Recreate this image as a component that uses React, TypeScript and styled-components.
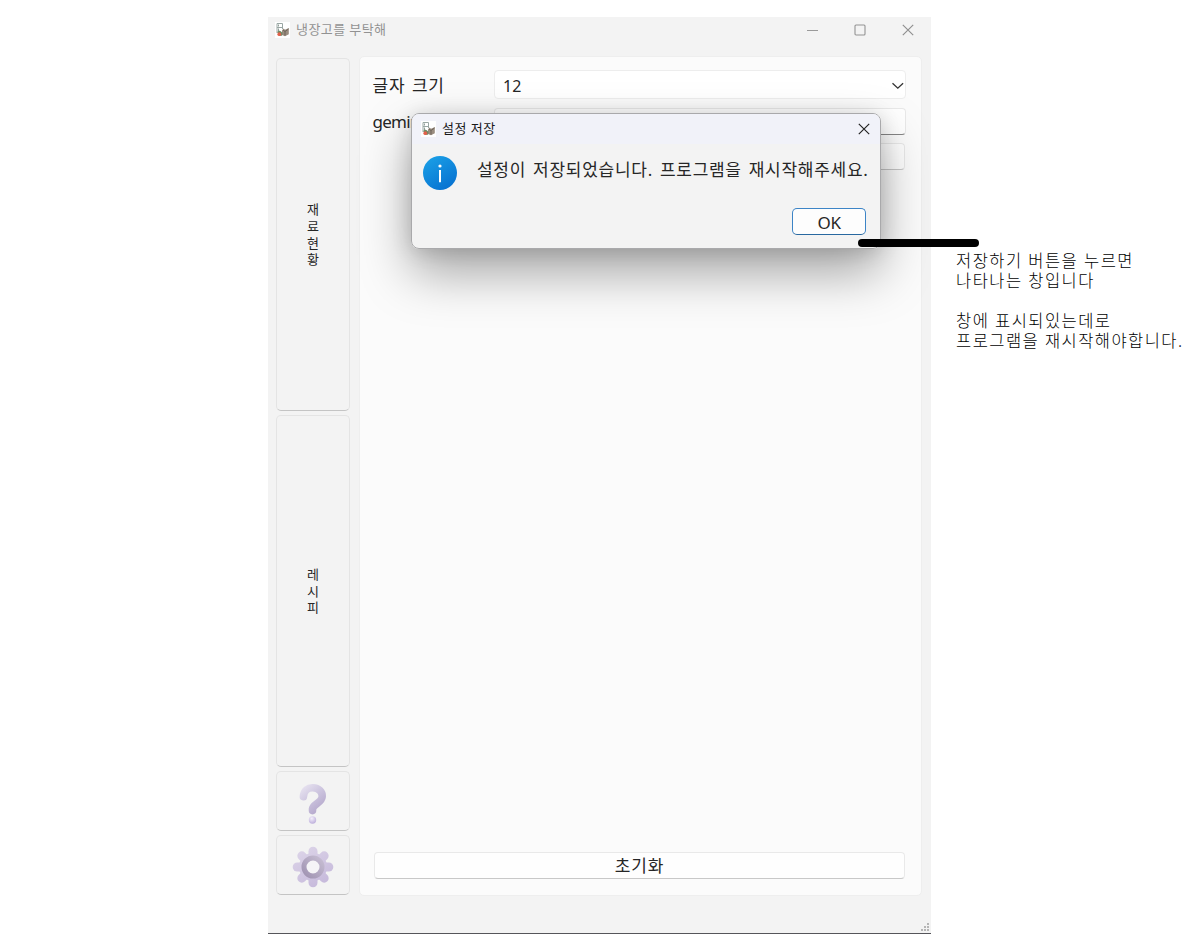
import React from "react";
import styled, { createGlobalStyle } from "styled-components";

const GlobalStyle = createGlobalStyle`
  * { box-sizing: border-box; }
  body { margin: 0; background: #fff; overflow: hidden; }
  button { font: inherit; color: inherit; padding: 0; margin: 0; }
`;

const Page = styled.main`
  position: relative;
  display: flex;
  align-items: flex-start;
  width: 1200px;
  height: 950px;
  padding: 17px 0 0 268px;
  font-family: "Noto Sans", "Noto Sans CJK KR", sans-serif;
  color: #262626;
`;

const Window = styled.section`
  flex: none;
  display: flex;
  flex-direction: column;
  width: 663px;
  height: 917px;
  background: #f3f3f3;
  border-bottom: 1px solid #55555a;
`;

const TitleBar = styled.header`
  display: flex;
  align-items: center;
  height: 25px;
  padding: 0 17px 0 7px;
  color: #929292;
`;

const Title = styled.span<{ $spacing: number }>`
  flex: 1;
  margin: -2px 0 0 6px;
  font-size: 13px;
  line-height: 16px;
  letter-spacing: ${(p) => p.$spacing}px;
  white-space: nowrap;
`;

const WindowControls = styled.div`
  display: flex;
  gap: 36px;
`;

const Body = styled.div`
  flex: 1;
  display: flex;
  gap: 9px;
  padding: 14px 9px 0 8px;
`;

const Sidebar = styled.nav`
  display: flex;
  flex-direction: column;
  gap: 4px;
  width: 74px;
  padding-top: 2px;
`;

const SideButton = styled.button<{ $height: number; $shift?: number }>`
  display: flex;
  flex-direction: column;
  align-items: center;
  justify-content: center;
  height: ${(p) => p.$height}px;
  padding-top: ${(p) => p.$shift ?? 0}px;
  background: #f3f3f3;
  border: 1px solid #e4e4e4;
  border-bottom-color: #c4c4c4;
  border-radius: 5px;
  font-size: 13px;
  line-height: 16.6px;
`;

const Panel = styled.div`
  display: flex;
  flex-direction: column;
  width: 563px;
  height: 840px;
  padding: 13px 15px 16px 12px;
  background: #fbfbfb;
  border: 1px solid #eeeeee;
  border-radius: 5px;
`;

const Row = styled.div<{ $gap: number }>`
  display: flex;
  margin-bottom: ${(p) => p.$gap}px;
`;

const Label = styled.label<{ $spacing: number; $line: number }>`
  width: 122px;
  height: 27px;
  padding-left: 0.5px;
  font-size: 17px;
  line-height: ${(p) => p.$line}px;
  letter-spacing: ${(p) => p.$spacing}px;
  word-spacing: 1.5px;
  white-space: nowrap;
`;

const Select = styled.div`
  flex: 1;
  display: flex;
  align-items: center;
  justify-content: space-between;
  height: 29px;
  padding: 2px 1px 0 8px;
  background: #fff;
  border: 1px solid #ededed;
  border-radius: 4px;
  font-size: 16px;
`;

const Input = styled.div`
  flex: 1;
  height: 27px;
  background: #fff;
  border: 1px solid #e9e9e9;
  border-bottom-color: #868686;
  border-radius: 4px;
`;

const WideButton = styled.button<{ $left: number }>`
  height: 27px;
  margin-left: ${(p) => p.$left}px;
  margin-right: 1px;
  background: #fefefe;
  border: 1px solid #e9e9e9;
  border-bottom-color: #c8c8c8;
  border-radius: 4px;
  font-size: 17px;
  line-height: 26px;
  letter-spacing: 0.9px;
`;

const Spacer = styled.div`
  flex: 1;
`;

const StatusBar = styled.footer`
  display: flex;
  justify-content: flex-end;
  padding: 0 1px 1px 0;
`;

const Dialog = styled.section`
  position: absolute;
  left: 411px;
  top: 113px;
  width: 470px;
  height: 136px;
  overflow: hidden;
  background: #f3f3f3;
  border: 1px solid #a9a9ab;
  border-radius: 8px;
`;

const DialogShadow = styled.div`
  position: absolute;
  left: 268px;
  top: 17px;
  width: 663px;
  height: 916px;
  overflow: hidden;

  &::before {
    content: "";
    position: absolute;
    left: 143px;
    top: 96px;
    width: 470px;
    height: 136px;
    border-radius: 8px;
    box-shadow: 0 24px 50px rgba(0, 0, 0, 0.34), 0 2px 20px rgba(0, 0, 0, 0.14);
  }
`;

const DialogTitle = styled.header`
  display: flex;
  align-items: center;
  height: 30px;
  padding: 0 10px 0 9px;
  background: #f1f2f9;
  color: #191919;
`;

const DialogContent = styled.div`
  display: flex;
  gap: 20px;
  padding: 12px 0 0 11px;
`;

const Message = styled.p`
  margin: 0;
  font-size: 17px;
  line-height: 28px;
  letter-spacing: 0.73px;
  word-spacing: 1.8px;
  white-space: nowrap;
`;

const DialogActions = styled.div`
  display: flex;
  justify-content: flex-end;
  padding: 18px 14px 0 0;
`;

const OkButton = styled.button`
  width: 74px;
  height: 27px;
  background: #fdfdfd;
  border: 1px solid #3c84c6;
  border-bottom-color: #2868a0;
  border-radius: 5px;
  font-size: 17px;
  line-height: 27px;
  letter-spacing: -0.4px;
`;

const Pointer = styled.div`
  position: absolute;
  left: 858px;
  top: 239px;
  width: 121px;
  height: 8px;
  border-radius: 4px;
  background: #000;
`;

const Note = styled.div`
  flex: none;
  margin: 233px 0 0 25px;
  font-family: "Noto Sans CJK KR", sans-serif;
  font-weight: 300;
  font-size: 16.5px;
  line-height: 20px;
  letter-spacing: 1.45px;
  word-spacing: 0.7px;
  color: #000;
`;

const NoteLine = styled.div`
  height: 20px;
  white-space: nowrap;
`;

const FridgeIcon = () => (
  <svg width="15" height="16" viewBox="0 0 15 16">
    <rect width="15" height="16" fill="#fff" />
    <path d="M2 1.500h5.500v5.500M2 1.500v9.500M2 5.500h5.500" fill="none" stroke="#9aa7a4" />
    <path d="M3.500 2.500v2M3.500 6.500v2.500" stroke="#74857f" strokeWidth=".8" />
    <path d="M7 8.500l1.500-2 1.500 1.200L13.800 6v6.200L10 14.300 7 13z" fill="#9a8d80" />
    <path d="M8 8l2 1.500L13.500 7M10 9.500v4" stroke="#625a50" strokeWidth=".8" fill="none" />
    <path d="M2.300 10l1.500-1.500 2 .8 1.700 1.500-.5 3H4z" fill="#6d8a63" />
    <circle cx="4.300" cy="12.200" r="1.900" fill="#e2604a" />
  </svg>
);

const CloseIcon = ({ color }: { color: string }) => (
  <svg width="12" height="12" viewBox="0 0 12 12" fill="none" stroke={color} strokeWidth="1.15">
    <path d="M.8.8l10.400 10.400M11.200.8L.8 11.200" />
  </svg>
);

const MinimizeIcon = () => (
  <svg width="12" height="12" viewBox="0 0 12 12">
    <path d="M1 6.500h11" stroke="#9a9a9a" />
  </svg>
);

const MaximizeIcon = () => (
  <svg width="12" height="12" viewBox="0 0 12 12">
    <rect x="1" y="1" width="10" height="10" rx="1" fill="none" stroke="#939393" strokeWidth="1.1" />
  </svg>
);

const ChevronIcon = () => (
  <svg width="13" height="8" viewBox="0 0 13 8">
    <path d="M1.500 1.200l5.300 5 5.300-5" fill="none" stroke="#333" strokeWidth="1.300" />
  </svg>
);

const InfoIcon = () => (
  <svg width="34" height="34" viewBox="0 0 34 34">
    <defs>
      <linearGradient id="info" x1=".2" y1="0" x2=".8" y2="1">
        <stop offset="0" stopColor="#1a9fe6" />
        <stop offset="1" stopColor="#0670d0" />
      </linearGradient>
    </defs>
    <circle cx="17" cy="17" r="17" fill="url(#info)" />
    <circle cx="17" cy="10" r="1.600" fill="#fff" />
    <path d="M17 14v12.300" stroke="#fff" strokeWidth="2" />
  </svg>
);

const QuestionIcon = () => (
  <svg width="42" height="42" viewBox="0 0 42 42">
    <defs>
      <linearGradient id="hook" x1="0" y1="0" x2=".7" y2="1">
        <stop offset="0" stopColor="#e4dfee" />
        <stop offset=".5" stopColor="#cdc5df" />
        <stop offset="1" stopColor="#b9adcf" />
      </linearGradient>
      <radialGradient id="dot" cx=".4" cy=".3" r=".7">
        <stop offset="0" stopColor="#f4effb" />
        <stop offset="1" stopColor="#beb0dc" />
      </radialGradient>
    </defs>
    <path
      d="M12 14.200C12.500 8 16.500 5.200 21.500 5.400c6 .2 9.600 4.200 9.300 8.800-.4 6.600-9.300 7.200-9.700 12.500v1.500"
      transform="translate(-.6 .4)"
      fill="none"
      stroke="url(#hook)"
      strokeWidth="7.600"
      strokeLinecap="round"
      strokeLinejoin="round"
    />
    <circle cx="20.500" cy="38" r="3.700" fill="url(#dot)" />
  </svg>
);

const teeth = [0, 45, 90, 135, 180, 225, 270, 315];

const GearIcon = () => (
  <svg width="42" height="42" viewBox="0 0 42 42">
    <defs>
      <linearGradient id="teeth" gradientUnits="userSpaceOnUse" x1="8" y1="2" x2="30" y2="40">
        <stop offset="0" stopColor="#dcd4e8" />
        <stop offset="1" stopColor="#c6b9db" />
      </linearGradient>
      <linearGradient id="ring" x1="1" y1="0" x2="0" y2="1">
        <stop offset="0" stopColor="#c6bdd2" />
        <stop offset="1" stopColor="#a093b2" />
      </linearGradient>
    </defs>
    <g fill="none" stroke="url(#teeth)" strokeWidth="9" strokeLinecap="round">
      {teeth.map((a) => {
        const r = (a * Math.PI) / 180;
        return (
          <path
            key={a}
            d={`M${21 + 9 * Math.cos(r)} ${21 + 9 * Math.sin(r)}L${21 + 15.8 * Math.cos(r)} ${21 + 15.8 * Math.sin(r)}`}
          />
        );
      })}
    </g>
    <circle cx="21" cy="21" r="14" fill="url(#teeth)" />
    <circle cx="21" cy="21" r="9" fill="#f5f4f7" stroke="url(#ring)" strokeWidth="5" />
  </svg>
);

const SizeGrip = () => (
  <svg width="10" height="10" viewBox="0 0 10 10" fill="#b5b5b5">
    <path d="M7 1h2v2H7zM4 4h2v2H4zM7 4h2v2H7zM1 7h2v2H1zM4 7h2v2H4zM7 7h2v2H7z" />
  </svg>
);

const vertical = (text: string) => text.split("").map((c) => <span key={c}>{c}</span>);

export default function App() {
  return (
    <>
      <GlobalStyle />
      <Page>
        <Window>
          <TitleBar>
            <FridgeIcon />
            <Title $spacing={0.42}>냉장고를 부탁해</Title>
            <WindowControls>
              <MinimizeIcon />
              <MaximizeIcon />
              <CloseIcon color="#8f8f8f" />
            </WindowControls>
          </TitleBar>
          <Body>
            <Sidebar>
              <SideButton $height={353}>{vertical("재료현황")}</SideButton>
              <SideButton $height={352}>{vertical("레시피")}</SideButton>
              <SideButton $height={60} $shift={3}><QuestionIcon /></SideButton>
              <SideButton $height={60} $shift={4}><GearIcon /></SideButton>
            </Sidebar>
            <Panel>
              <Row $gap={9}>
                <Label $spacing={0.75} $line={31}>글자 크기</Label>
                <Select>
                  12
                  <ChevronIcon />
                </Select>
              </Row>
              <Row $gap={8}>
                <Label $spacing={-0.75} $line={28}>gemini</Label>
                <Input />
              </Row>
              <WideButton $left={122} aria-label="save" />
              <Spacer />
              <WideButton $left={2}>초기화</WideButton>
            </Panel>
          </Body>
          <StatusBar>
            <SizeGrip />
          </StatusBar>
        </Window>
        <Note>
          <NoteLine>저장하기 버튼을 누르면</NoteLine>
          <NoteLine>나타나는 창입니다</NoteLine>
          <NoteLine />
          <NoteLine>창에 표시되있는데로</NoteLine>
          <NoteLine>프로그램을 재시작해야합니다.</NoteLine>
        </Note>
        <DialogShadow />
        <Dialog>
          <DialogTitle>
            <FridgeIcon />
            <Title $spacing={0.5}>설정 저장</Title>
            <CloseIcon color="#222" />
          </DialogTitle>
          <DialogContent>
            <InfoIcon />
            <Message>설정이 저장되었습니다. 프로그램을 재시작해주세요.</Message>
          </DialogContent>
          <DialogActions>
            <OkButton>OK</OkButton>
          </DialogActions>
        </Dialog>
        <Pointer />
      </Page>
    </>
  );
}
